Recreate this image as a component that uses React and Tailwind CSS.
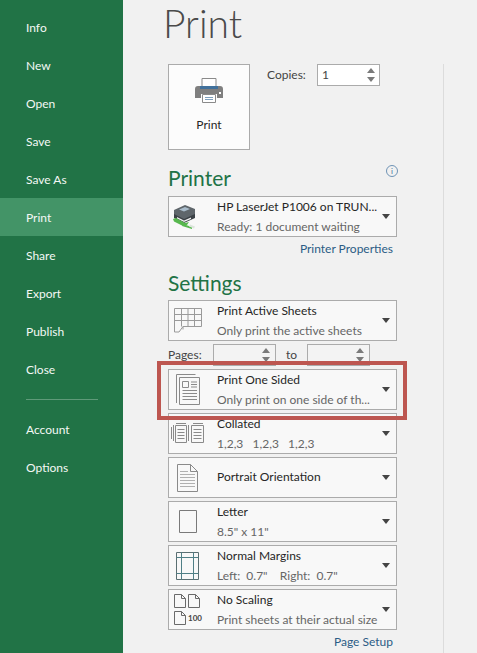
import React from "react";

const topNav = ["Info", "New", "Open", "Save", "Save As", "Print", "Share", "Export", "Publish", "Close"];
const bottomNav = ["Account", "Options"];

const Spin = () => (
  <div className="flex flex-col items-center gap-[4px]">
    <span className="w-0 h-0 border-x-[4px] border-x-transparent border-b-[5px] border-b-[#7a7a7a]" />
    <span className="w-0 h-0 border-x-[4px] border-x-transparent border-t-[5px] border-t-[#7a7a7a]" />
  </div>
);

const SheetsIcon = () => (
  <svg width="28" height="25" viewBox="0 0 28 25" fill="none" stroke="#9a9a9a" strokeWidth="1">
    <path d="M.5.500h27v18H9l-4 5.500H.5z" />
    <path d="M.5 6.500h27M.5 12.500h27M7.500.500v18M14 .500v18M20.500.500v18M9 18.500v3" />
  </svg>
);

const OneSidedIcon = () => (
  <svg width="24" height="31" viewBox="0 0 24 31" fill="none" stroke="#8a8a8a" strokeWidth="1">
    <path d="M.5 29V.500h19" />
    <path d="M3.500 3.500h20v27h-20z" />
    <path d="M6.500 7.500h6v6h-6zM15 8h6M15 10.500h6M15 13h6M6.500 16.500h14.500M6.500 19.500h14.500M6.500 22.500h14.500M6.500 25.500h14.500" />
  </svg>
);

const CollatedIcon = () => (
  <svg width="33" height="21" viewBox="0 0 33 21" fill="none" stroke="#8a8a8a" strokeWidth="1">
    <path d="M.5 4v12M2.500 2v16M17.500 2v16M5 .500h10M22 .500h10" />
    <path d="M4.500 2.500h11v17h-11zM20.500 2.500h12v17h-12z" />
    <path d="M6.500 6.500h7M6.500 9.500h7M6.500 12.500h7M6.500 15.500h7M22.500 6.500h8M22.500 9.500h8M22.500 12.500h8M22.500 15.500h8" />
  </svg>
);

const PortraitIcon = () => (
  <svg width="21" height="28" viewBox="0 0 21 28" fill="none" stroke="#8a8a8a" strokeWidth="1">
    <path d="M.5.500h13l7 7v20H.5zM13.500.500v7h7" />
    <path d="M3 7.500h8M3 10.500h15M3 13.500h15M3 16.500h15M3 19.500h15M3 22.500h15" stroke="#b0b0b0" />
  </svg>
);

const LetterIcon = () => (
  <svg width="18" height="23" viewBox="0 0 18 23" fill="none" stroke="#7a7a7a" strokeWidth="1">
    <path d="M.5.500h17v22H.5z" />
  </svg>
);

const MarginsIcon = () => (
  <svg width="23" height="28" viewBox="0 0 23 28" fill="none" stroke="#4f7f86" strokeWidth="1">
    <path d="M.5.500h22v27H.5z" stroke="#5a6f72" />
    <path d="M.5 5.500h22M.5 21.500h22M5.500.500v27M17.500.500v27" />
  </svg>
);

const ScalingIcon = () => (
  <svg width="27" height="31" viewBox="0 0 27 31" fill="none" stroke="#6a6a6a" strokeWidth="1">
    <path d="M.5.500h7l4 4v9H.5zM7.500.500v4h4M14.500.500h7l4 4v9h-11zM21.500.500v4h4M.5 17.500h7l4 4v9H.5zM7.500 17.500v4h4" />
  </svg>
);

const PrinterBigIcon = () => (
  <svg width="28" height="25" viewBox="0 0 28 25">
    <path d="M7 .500h14v9H7z" fill="#fff" stroke="#8a8a8a" />
    <path d="M3 8h22a3 3 0 0 1 3 3v9h-6v-4H6v4H0v-9a3 3 0 0 1 3-3z" fill="#7f7f7f" />
    <path d="M5 8h18v3H5z" fill="#41719c" />
    <path d="M7.500 16.500h13v8h-13z" fill="#fff" stroke="#8a8a8a" />
    <path d="M10 19.500h8M10 21.500h8" stroke="#7fa0bd" />
    <path d="M24 14h2v2h-2z" fill="#fff" />
  </svg>
);

const DevicePrinterIcon = () => (
  <svg width="23" height="25" viewBox="0 0 23 25" className="mr-[6px]">
    <path d="M1 6l11-5 10 4v7l-11 5-10-5z" fill="#5f666b" />
    <path d="M6 5.500l6-2.500 5 2-6 2.500z" fill="#a9bccb" />
    <path d="M1 10l10 5 11-5v4l-11 5-10-5z" fill="#3b4146" />
    <path d="M4 13l7 3.500 7-3v1.500l-7 3-7-3.500z" fill="#f2f2f2" />
    <path d="M0 15l3-1 9 5 4-1-2 3-4 1-9-4.500z" fill="#58b84f" />
    <path d="M10 20l9 3v2l-10-3z" fill="#58b84f" />
    <path d="M17 20.500l5 2-1 2-5-2z" fill="#dce5dc" />
  </svg>
);

const Row = ({ icon, title, sub }) => (
  <div className="h-[41px] w-[229px] shrink-0 flex items-center bg-[#f8f8f8] border border-[#ababab] relative">
    <div className="w-[37px] shrink-0 flex justify-center">{icon}</div>
    <div className={"ml-[11px] min-w-0 leading-[20px] " + (sub ? "" : "pb-[2px]")}>
      <div className="text-[#262626] whitespace-nowrap">{title}</div>
      {sub && <div className="text-[#666666] whitespace-pre">{sub}</div>}
    </div>
    <span className="absolute right-[6px] top-[17px] w-0 h-0 border-x-[4px] border-x-transparent border-t-[5px] border-t-[#444444]" />
  </div>
);

const PageInput = () => (
  <div className="w-[63px] h-[22px] border border-[#ababab] bg-[#f3f3f3] flex justify-end items-center pr-[5px]">
    <Spin />
  </div>
);

export default function App() {
  return (
    <div
      className="w-[477px] h-[653px] overflow-hidden flex bg-[#f1f1f1] relative text-[12px]"
      style={{ fontFamily: 'Lato, "Open Sans", sans-serif' }}
    >
      {/* left nav */}
      <nav className="w-[123px] shrink-0 bg-[#217346] pt-[8px] text-[#f4f8f5]">
        {topNav.map((item) => (
          <div
            key={item}
            className={"h-[38px] pl-[26px] pt-[2px] flex items-center " + (item === "Print" ? "bg-[#439467]" : "")}
          >
            {item}
          </div>
        ))}
        <div className="mt-[11px] mb-[10px] ml-[26px] w-[72px] h-px bg-[#5f9a79]" />
        {bottomNav.map((item) => (
          <div key={item} className="h-[38px] pl-[26px] pt-[2px] flex items-center">
            {item}
          </div>
        ))}
      </nav>

      {/* print pane */}
      <main className="flex-1 flex min-w-0 pl-[45px]">
        <div className="w-[229px] shrink-0 flex flex-col">
          <h1 className="h-[64px] shrink-0 -ml-[5px] text-[39px] leading-[46px] font-light text-[#4a4a4a]">
            Print
          </h1>

          <div className="flex items-start h-[86px] shrink-0">
            <div className="w-[82px] h-[86px] border border-[#ababab] bg-[#fcfcfc] flex flex-col items-center pt-[13px]">
              <PrinterBigIcon />
              <span className="mt-[13px] leading-[18px] text-[#262626]">Print</span>
            </div>
            <span className="ml-[17px] mt-[2px] text-[#444444] w-[50px]">Copies:</span>
            <div className="w-[63px] h-[22px] border border-[#ababab] bg-white flex items-center justify-between pl-[4px] pr-[4px]">
              <span className="text-[#444444]">1</span>
              <Spin />
            </div>
          </div>

          <h2 className="mt-[14px] h-[28px] shrink-0 text-[21px] leading-[28px] text-[#217346]">Printer</h2>
          <div className="mt-[4px]">
            <Row
              icon={<DevicePrinterIcon />}
              title="HP LaserJet P1006 on TRUN..."
              sub="Ready: 1 document waiting"
            />
          </div>
          <div className="mt-[3px] pr-[4px] text-right text-[#2b5c85] leading-[18px]">Printer Properties</div>

          <h2 className="mt-[11px] h-[28px] shrink-0 text-[21px] leading-[28px] text-[#217346]">Settings</h2>
          <div className="mt-[3px] flex flex-col gap-[3px]">
            <Row icon={<SheetsIcon />} title="Print Active Sheets" sub="Only print the active sheets" />
            <div className="h-[22px] shrink-0 flex items-center">
              <span className="w-[45px] text-[#444444]">Pages:</span>
              <PageInput />
              <span className="w-[31px] text-center text-[#444444]">to</span>
              <PageInput />
            </div>
            <Row icon={<OneSidedIcon />} title="Print One Sided" sub="Only print on one side of th..." />
            <Row icon={<CollatedIcon />} title="Collated" sub="1,2,3   1,2,3   1,2,3" />
            <Row icon={<PortraitIcon />} title="Portrait Orientation" />
            <Row icon={<LetterIcon />} title="Letter" sub={'8.5" x 11"'} />
            <Row icon={<MarginsIcon />} title="Normal Margins" sub={'Left:  0.7"    Right:  0.7"'} />
            <Row
              icon={
                <div className="relative w-[27px] h-[31px]">
                  <ScalingIcon />
                  <span className="absolute left-[14px] top-[17px] text-[8px] font-bold text-[#444444] leading-[14px]">100</span>
                </div>
              }
              title="No Scaling"
              sub="Print sheets at their actual size"
            />
          </div>
          <div className="mt-[3px] pr-[4px] text-right text-[#2b5c85] leading-[18px]">Page Setup</div>
        </div>
        <div className="mt-[64px] ml-[46px] w-px h-[589px] bg-[#dcdcdc]" />
      </main>

      {/* info dot */}
      <div className="absolute left-[386px] top-[165px] w-[12px] h-[12px] rounded-full border border-[#6f93b5] text-[#41719c] text-[8px] leading-[10px] text-center">
        i
      </div>

      {/* red annotation box */}
      <div className="absolute left-[157px] top-[361px] w-[250px] h-[59px] border-4 border-[#bd5650] pointer-events-none" />
    </div>
  );
}
